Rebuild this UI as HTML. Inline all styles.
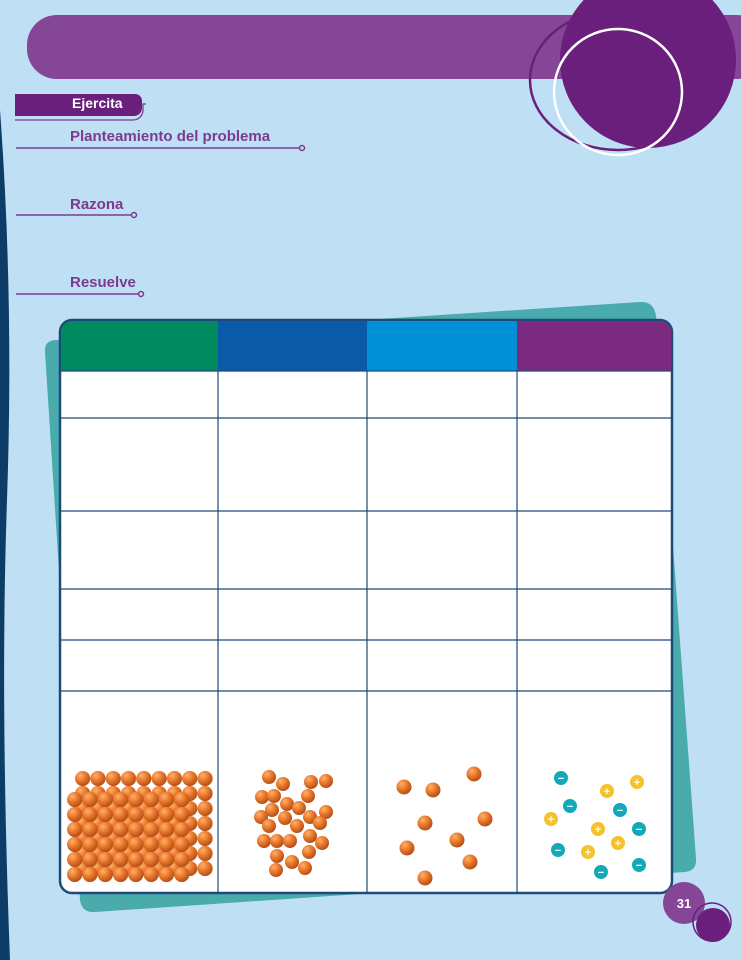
<!DOCTYPE html>
<html><head><meta charset="utf-8"><style>
body{margin:0;width:741px;height:960px;background:#bfe0f4;position:relative;overflow:hidden;font-family:"Liberation Sans",sans-serif}
.t{position:absolute;font-weight:bold;color:#7b3a8e;font-size:15px}
</style></head><body>
<svg width="741" height="960" style="position:absolute;left:0;top:0">
<defs>
<radialGradient id="o" cx="35%" cy="30%" r="70%"><stop offset="0" stop-color="#ffb070"/><stop offset=".5" stop-color="#ea7a2a"/><stop offset="1" stop-color="#b4501a"/></radialGradient>
<pattern id="p" x="67" y="792" width="15.3" height="15" patternUnits="userSpaceOnUse"><circle cx="7.65" cy="7.5" r="7.6" fill="url(#o)"/></pattern>
<pattern id="p2" x="75" y="771" width="15.3" height="15" patternUnits="userSpaceOnUse"><circle cx="7.65" cy="7.5" r="7.6" fill="url(#o)"/></pattern>
</defs>
<path d="M0 110 Q14 300 7 500 Q0 700 10 960 L0 960Z" fill="#0d3d66"/>
<rect x="27" y="15" width="740" height="64" rx="30" fill="#854697"/>
<circle cx="648" cy="60" r="88" fill="#6a1f7c"/>
<ellipse cx="618" cy="80" rx="88" ry="70" fill="none" stroke="#6a1f7c" stroke-width="2.5"/>
<ellipse cx="618" cy="92" rx="64" ry="63" fill="none" stroke="#fff" stroke-width="2.5"/>
<path d="M15 94 H135 a7 7 0 0 1 7 7 v7 a8 8 0 0 1 -8 8 H15Z" fill="#6a1f7c"/>
<path d="M15 120 H133 a10 10 0 0 0 10 -10 V104 h3" fill="none" stroke="#7b3a8e" stroke-width="1.3"/>
<g stroke="#7b3a8e" stroke-width="1.5" fill="none"><path d="M16 148 H300"/><circle cx="302" cy="148" r="2.5"/><path d="M16 215 H132"/><circle cx="134" cy="215" r="2.5"/><path d="M16 294 H139"/><circle cx="141" cy="294" r="2.5"/></g>
<path d="M55 340 Q44 341 45 352 L80 900 Q82 913 95 912 L685 872 Q697 871 696 858 L656 316 Q654 301 640 302Z" fill="#4aabad"/>
<rect x="60" y="320" width="612" height="573" rx="12" fill="#fff" stroke="#1e4a78" stroke-width="2.5"/>
<path d="M61 332 a11 11 0 0 1 11 -11 H218 V371 H61Z" fill="#008a60"/>
<rect x="218" y="321" width="149" height="50" fill="#0a5aa8"/>
<rect x="367" y="321" width="150" height="50" fill="#0090d8"/>
<path d="M517 321 H660 a11 11 0 0 1 11 11 V371 H517Z" fill="#7b2a80"/>
<g stroke="#1e4a78" stroke-width="1.2"><path d="M218 371V892M367 371V892M517 371V892M61 371H671M61 418H671M61 511H671M61 589H671M61 640H671M61 691H671"/></g>
<rect x="75" y="771" width="137.7" height="105" fill="url(#p2)"/>
<rect x="67" y="792" width="122.4" height="90" fill="url(#p)"/>
<g fill="url(#o)">
<circle cx="269" cy="777" r="7"/><circle cx="283" cy="784" r="7"/><circle cx="311" cy="782" r="7"/><circle cx="326" cy="781" r="7"/><circle cx="262" cy="797" r="7"/><circle cx="274" cy="796" r="7"/><circle cx="308" cy="796" r="7"/><circle cx="287" cy="804" r="7"/><circle cx="299" cy="808" r="7"/><circle cx="272" cy="810" r="7"/><circle cx="261" cy="817" r="7"/><circle cx="285" cy="818" r="7"/><circle cx="310" cy="817" r="7"/><circle cx="326" cy="812" r="7"/><circle cx="269" cy="826" r="7"/><circle cx="297" cy="826" r="7"/><circle cx="320" cy="823" r="7"/><circle cx="264" cy="841" r="7"/><circle cx="277" cy="841" r="7"/><circle cx="290" cy="841" r="7"/><circle cx="310" cy="836" r="7"/><circle cx="322" cy="843" r="7"/><circle cx="277" cy="856" r="7"/><circle cx="309" cy="852" r="7"/><circle cx="292" cy="862" r="7"/><circle cx="276" cy="870" r="7"/><circle cx="305" cy="868" r="7"/>
<circle cx="404" cy="787" r="7.5"/><circle cx="433" cy="790" r="7.5"/><circle cx="474" cy="774" r="7.5"/><circle cx="425" cy="823" r="7.5"/><circle cx="485" cy="819" r="7.5"/><circle cx="457" cy="840" r="7.5"/><circle cx="407" cy="848" r="7.5"/><circle cx="470" cy="862" r="7.5"/><circle cx="425" cy="878" r="7.5"/>
</g>
<g font-family="Liberation Sans" font-weight="bold" font-size="11" text-anchor="middle" fill="#fff">
<g fill="#14a9b8"><circle cx="561" cy="778" r="7"/><circle cx="570" cy="806" r="7"/><circle cx="620" cy="810" r="7"/><circle cx="639" cy="829" r="7"/><circle cx="558" cy="850" r="7"/><circle cx="639" cy="865" r="7"/><circle cx="601" cy="872" r="7"/></g>
<g fill="#f5c22a"><circle cx="637" cy="782" r="7"/><circle cx="607" cy="791" r="7"/><circle cx="551" cy="819" r="7"/><circle cx="598" cy="829" r="7"/><circle cx="618" cy="843" r="7"/><circle cx="588" cy="852" r="7"/></g>
<text x="561" y="782">−</text><text x="570" y="810">−</text><text x="620" y="814">−</text><text x="639" y="833">−</text><text x="558" y="854">−</text><text x="639" y="869">−</text><text x="601" y="876">−</text>
<text x="637" y="786">+</text><text x="607" y="795">+</text><text x="551" y="823">+</text><text x="598" y="833">+</text><text x="618" y="847">+</text><text x="588" y="856">+</text>
</g>
<circle cx="684" cy="903" r="21" fill="#854697"/>
<circle cx="712" cy="922" r="19" fill="none" stroke="#6a1f7c" stroke-width="1.5"/>
<circle cx="713" cy="925" r="17" fill="#6a1f7c"/>
<text x="684" y="908" font-size="13" font-weight="bold" fill="#fff" text-anchor="middle" font-family="Liberation Sans">31</text>
</svg>
<div class="t" style="left:72px;top:95px;color:#fff;font-size:14px">Ejercita</div>
<div class="t" style="left:70px;top:128px">Planteamiento del problema</div>
<div class="t" style="left:70px;top:196px">Razona</div>
<div class="t" style="left:70px;top:274px">Resuelve</div>
</body></html>
